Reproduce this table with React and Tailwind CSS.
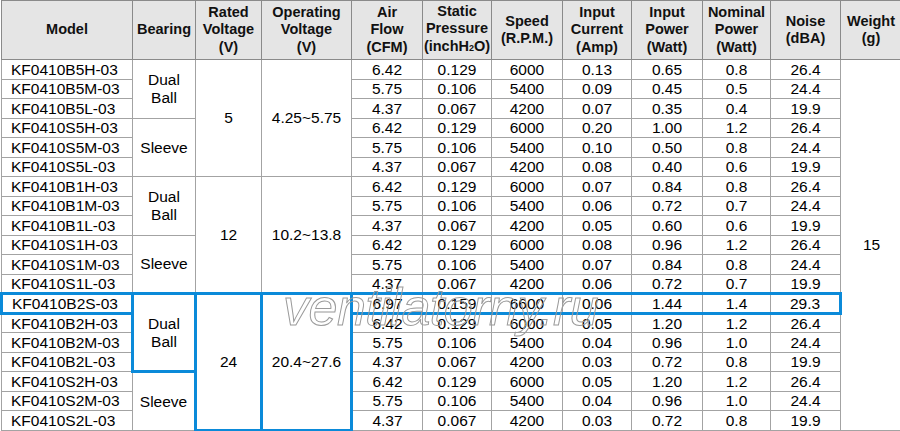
import React from 'react';

const rows = [
  ['KF0410B5H-03', '6.42', '0.129', '6000', '0.13', '0.65', '0.8', '26.4'],
  ['KF0410B5M-03', '5.75', '0.106', '5400', '0.09', '0.45', '0.5', '24.4'],
  ['KF0410B5L-03', '4.37', '0.067', '4200', '0.07', '0.35', '0.4', '19.9'],
  ['KF0410S5H-03', '6.42', '0.129', '6000', '0.20', '1.00', '1.2', '26.4'],
  ['KF0410S5M-03', '5.75', '0.106', '5400', '0.10', '0.50', '0.8', '24.4'],
  ['KF0410S5L-03', '4.37', '0.067', '4200', '0.08', '0.40', '0.6', '19.9'],
  ['KF0410B1H-03', '6.42', '0.129', '6000', '0.07', '0.84', '0.8', '26.4'],
  ['KF0410B1M-03', '5.75', '0.106', '5400', '0.06', '0.72', '0.7', '24.4'],
  ['KF0410B1L-03', '4.37', '0.067', '4200', '0.05', '0.60', '0.6', '19.9'],
  ['KF0410S1H-03', '6.42', '0.129', '6000', '0.08', '0.96', '1.2', '26.4'],
  ['KF0410S1M-03', '5.75', '0.106', '5400', '0.07', '0.84', '0.8', '24.4'],
  ['KF0410S1L-03', '4.37', '0.067', '4200', '0.06', '0.72', '0.7', '19.9'],
  ['KF0410B2S-03', '6.97', '0.159', '6600', '0.06', '1.44', '1.4', '29.3'],
  ['KF0410B2H-03', '6.42', '0.129', '6000', '0.05', '1.20', '1.2', '26.4'],
  ['KF0410B2M-03', '5.75', '0.106', '5400', '0.04', '0.96', '1.0', '24.4'],
  ['KF0410B2L-03', '4.37', '0.067', '4200', '0.03', '0.72', '0.8', '19.9'],
  ['KF0410S2H-03', '6.42', '0.129', '6000', '0.05', '1.20', '1.2', '26.4'],
  ['KF0410S2M-03', '5.75', '0.106', '5400', '0.04', '0.96', '1.0', '24.4'],
  ['KF0410S2L-03', '4.37', '0.067', '4200', '0.03', '0.72', '0.8', '19.9'],
];

// row index -> [label, rowspan]
const bearing = {
  0: ['dual', 3], 3: ['sleeve', 3], 6: ['dual', 3],
  9: ['sleeve', 3], 12: ['dual', 4], 16: ['sleeve', 3],
};
const voltage = {
  0: ['5', '4.25~5.75', 6],
  6: ['12', '10.2~13.8', 6],
  12: ['24', '20.4~27.6', 7],
};

const HIGHLIGHT = 12;

const base = 'p-0 text-center align-middle';
const gray = 'border border-[#a3a3a3]';
const blue = 'border-[3px] border-[#0b8ad9]';
const head = 'border border-[#8a8a8a] bg-[#e5e5e5] p-0 text-center align-middle font-bold text-[14.5px] leading-[17.5px] text-[#111]';

const widths = [131, 63, 66, 90, 71, 69, 71, 69, 71, 68, 70, 61];

export default function App() {
  return (
    <div className="relative w-[900px] h-[431px] overflow-hidden bg-white text-black font-['Liberation_Sans',Arial,sans-serif]">
      <table className="table-fixed border-collapse w-[900px]">
        <colgroup>
          {widths.map((w, i) => (
            <col key={i} style={{ width: w }} />
          ))}
        </colgroup>
        <thead>
          <tr className="h-[59px]">
            <th className={head}>Model</th>
            <th className={head}>Bearing</th>
            <th className={head}>Rated<br />Voltage<br />(V)</th>
            <th className={head}>Operating<br />Voltage<br />(V)</th>
            <th className={head}>Air<br />Flow<br />(CFM)</th>
            <th className={head}>Static<br />Pressure<br />(inchH<span className="text-[9px]">2</span>O)</th>
            <th className={head}>Speed<br />(R.P.M.)</th>
            <th className={head}>Input<br />Current<br />(Amp)</th>
            <th className={head}>Input<br />Power<br />(Watt)</th>
            <th className={head}>Nominal<br />Power<br />(Watt)</th>
            <th className={head}>Noise<br />(dBA)</th>
            <th className={head}>Weight<br />(g)</th>
          </tr>
        </thead>
        <tbody className="text-[15.5px] leading-none">
          {rows.map((r, i) => {
            const hi = i === HIGHLIGHT;
            const b = bearing[i];
            const v = voltage[i];
            const edge = hi ? blue : gray;
            return (
              <tr key={r[0]} className="h-[19.5px]">
                <td className={`${base} ${edge} !text-left pl-[9px]`}>{r[0]}</td>
                {b && (
                  <td rowSpan={b[1]} className={`${base} ${edge} leading-[17.5px]`}>
                    {b[0] === 'dual' ? (<>Dual<br />Ball</>) : 'Sleeve'}
                  </td>
                )}
                {v && (
                  <td rowSpan={v[2]} className={`${base} ${edge}`}>{v[0]}</td>
                )}
                {v && (
                  <td rowSpan={v[2]} className={`${base} ${edge}`}>{v[1]}</td>
                )}
                {r.slice(1).map((val, j) => {
                  let cls = gray;
                  if (hi) {
                    cls = j === 6
                      ? 'border-l border-l-[#a3a3a3] border-y-[3px] border-y-[#0b8ad9] border-r-[3px] border-r-[#0b8ad9]'
                      : 'border-x border-x-[#a3a3a3] border-y-[3px] border-y-[#0b8ad9]';
                  }
                  return (
                    <td key={j} className={`${base} ${cls}`}>
                      {val}
                    </td>
                  );
                })}
                {i === 0 && (
                  <td rowSpan={19} className={`${base} ${gray}`}>15</td>
                )}
              </tr>
            );
          })}
        </tbody>
      </table>

      {/* watermark */}
      <div className="pointer-events-none absolute left-[283px] top-[281px] text-[52px] leading-none italic text-transparent [-webkit-text-stroke:1px_#9a9a9a] tracking-[-0.5px]">
        ventilatorny.ru
      </div>
    </div>
  );
}
